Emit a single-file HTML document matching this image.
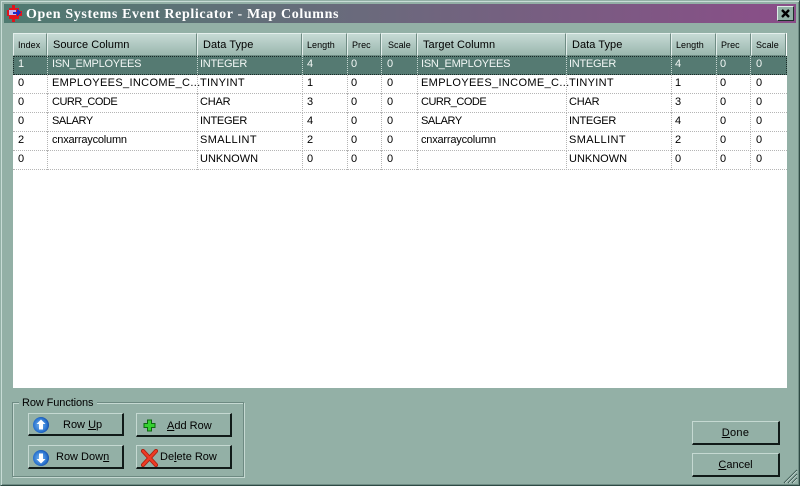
<!DOCTYPE html>
<html><head><meta charset="utf-8"><style>
html,body{margin:0;padding:0;width:800px;height:486px;overflow:hidden;background:#93b0a6}
body{font:11px "Liberation Sans",sans-serif;color:#000;position:relative}
.a{position:absolute}
#win{left:0;top:0;width:798px;height:484px;border-top:1px solid #93b0a6;border-left:1px solid #93b0a6;border-right:1px solid #2e4a44;border-bottom:1px solid #2e4a44;box-shadow:inset 1px 1px 0 #c8dcd6,inset -1px -1px 0 #6f8c84}
#title{left:4px;top:4px;width:792px;height:19px;background:linear-gradient(90deg,#4f7a70,#6a6a7c 45%,#8a4d88)}
#title b{position:absolute;left:22px;top:2px;font:bold 14px/17px "Liberation Serif",serif;color:#fff;letter-spacing:.63px;white-space:nowrap}
#close{left:777px;top:6px;width:15px;height:13px;background:#93b0a6;border:1px solid;border-color:#dcebe6 #1d2f2b #1d2f2b #dcebe6}
#grid{left:13px;top:33px;width:774px;height:355px;background:#fff}
.h{position:absolute;top:0;height:21px;box-sizing:content-box;background:linear-gradient(#c6dad5,#9bb7ae);border-top:1px solid #e4efec;border-left:1px solid #e4efec;border-right:1px solid #6f8c84;border-bottom:1px solid #6f8c84;line-height:23px;white-space:nowrap;overflow:hidden}
.h.s{font-size:9px;padding-left:4px;letter-spacing:.05px}
.h.l{font-size:11px;padding-left:5px;letter-spacing:.05px}
.r{position:absolute;left:0;width:774px;height:18px;border-bottom:1px dotted #b5b5b5}
.r span{position:absolute;top:0;line-height:17px;white-space:nowrap}
.r i{position:absolute;top:0;height:19px;width:0;border-left:1px dotted #b5b5b5}
.r.sel{background:#557a72;color:#f2f7f5;outline:1px dotted #1a2a27;outline-offset:-1px;border-bottom:0;height:19px}
.r.sel i{border-color:#c6d6d1}
.i{letter-spacing:-.27px}.e{letter-spacing:.35px}.n{letter-spacing:-.24px}.c{letter-spacing:-.5px}.s{letter-spacing:-.4px}.k{letter-spacing:-.2px}.w{letter-spacing:.3px}.m{letter-spacing:.4px}.u{letter-spacing:0}.x{letter-spacing:-.2px}
.btn{position:absolute;box-sizing:border-box;background:#93b0a6;border:1px solid;border-color:#c5d9d2 #101a18 #101a18 #c5d9d2;border-width:1px 2px 2px 1px;font-size:11px;text-align:center;white-space:nowrap}
.btn u{text-decoration:underline}
#grp{left:12px;top:402px;width:230px;height:73px;border:1px solid #6d8a82;box-shadow:1px 1px 0 #c5d9d2,inset 1px 1px 0 #c5d9d2}
#grpl{left:19px;top:396px;background:#93b0a6;padding:0 4px 0 3px;font-size:11px;line-height:14px;letter-spacing:-.1px}
.t{position:absolute;white-space:nowrap}
</style></head><body>
<div class="a" id="win"></div>
<div class="a" id="title"><b>Open Systems Event Replicator - Map Columns</b></div>
<svg class="a" style="left:7px;top:5px" width="16" height="17" viewBox="0 0 16 17" shape-rendering="crispEdges"><path d="M5 0h3v3h4v3h3v5h-3v3H8v3H5v-3H2v-3H0V5h2V3h3z" fill="#e0141c"/><rect x="2" y="5" width="7" height="5" fill="#c0b8f0"/><path d="M6 7h4V4h1v1h1v1h1v1h1v1h-1v1h-1v1h-1v1h-1V9H6z" fill="#1c2cc8"/></svg>
<div class="a" id="close"><svg width="15" height="13" style="display:block"><path d="M4 3l7 7M11 3l-7 7" stroke="#000" stroke-width="2.400"/></svg></div>

<div class="a" id="grid">
<div class="h s" style="left:0;width:28px">Index</div>
<div class="h l" style="left:34px;width:143px">Source Column</div>
<div class="h l" style="left:184px;width:98px">Data Type</div>
<div class="h s" style="left:289px;width:39px">Length</div>
<div class="h s" style="left:334px;width:28px">Prec</div>
<div class="h s" style="left:368px;width:28px;padding-left:6px">Scale</div>
<div class="h l" style="left:404px;width:142px">Target Column</div>
<div class="h l" style="left:553px;width:98px">Data Type</div>
<div class="h s" style="left:658px;width:39px">Length</div>
<div class="h s" style="left:703px;width:29px">Prec</div>
<div class="h s" style="left:738px;width:29px">Scale</div>

<div class="r sel" style="top:23px"><i style="left:34px"></i><i style="left:184px"></i><i style="left:289px"></i><i style="left:334px"></i><i style="left:368px"></i><i style="left:404px"></i><i style="left:553px"></i><i style="left:658px"></i><i style="left:703px"></i><i style="left:737px"></i>
<span style="left:5px">1</span><span class="n" style="left:39px">ISN_EMPLOYEES</span><span class="i" style="left:187px">INTEGER</span><span style="left:294px">4</span><span style="left:338px">0</span><span style="left:374px">0</span><span class="n" style="left:408px">ISN_EMPLOYEES</span><span class="i" style="left:556px">INTEGER</span><span style="left:662px">4</span><span style="left:707px">0</span><span style="left:743px">0</span></div>

<div class="r" style="top:42px"><i style="left:34px"></i><i style="left:184px"></i><i style="left:289px"></i><i style="left:334px"></i><i style="left:368px"></i><i style="left:404px"></i><i style="left:553px"></i><i style="left:658px"></i><i style="left:703px"></i><i style="left:737px"></i>
<span style="left:5px">0</span><span class="e" style="left:39px">EMPLOYEES_INCOME_C...</span><span class="w" style="left:187px">TINYINT</span><span style="left:294px">1</span><span style="left:338px">0</span><span style="left:374px">0</span><span class="e" style="left:408px">EMPLOYEES_INCOME_C...</span><span class="w" style="left:556px">TINYINT</span><span style="left:662px">1</span><span style="left:707px">0</span><span style="left:743px">0</span></div>

<div class="r" style="top:61px"><i style="left:34px"></i><i style="left:184px"></i><i style="left:289px"></i><i style="left:334px"></i><i style="left:368px"></i><i style="left:404px"></i><i style="left:553px"></i><i style="left:658px"></i><i style="left:703px"></i><i style="left:737px"></i>
<span style="left:5px">0</span><span class="c" style="left:39px">CURR_CODE</span><span class="k" style="left:187px">CHAR</span><span style="left:294px">3</span><span style="left:338px">0</span><span style="left:374px">0</span><span class="c" style="left:408px">CURR_CODE</span><span class="k" style="left:556px">CHAR</span><span style="left:662px">3</span><span style="left:707px">0</span><span style="left:743px">0</span></div>

<div class="r" style="top:80px"><i style="left:34px"></i><i style="left:184px"></i><i style="left:289px"></i><i style="left:334px"></i><i style="left:368px"></i><i style="left:404px"></i><i style="left:553px"></i><i style="left:658px"></i><i style="left:703px"></i><i style="left:737px"></i>
<span style="left:5px">0</span><span class="s" style="left:39px">SALARY</span><span class="i" style="left:187px">INTEGER</span><span style="left:294px">4</span><span style="left:338px">0</span><span style="left:374px">0</span><span class="s" style="left:408px">SALARY</span><span class="i" style="left:556px">INTEGER</span><span style="left:662px">4</span><span style="left:707px">0</span><span style="left:743px">0</span></div>

<div class="r" style="top:99px"><i style="left:34px"></i><i style="left:184px"></i><i style="left:289px"></i><i style="left:334px"></i><i style="left:368px"></i><i style="left:404px"></i><i style="left:553px"></i><i style="left:658px"></i><i style="left:703px"></i><i style="left:737px"></i>
<span style="left:5px">2</span><span class="x" style="left:39px">cnxarraycolumn</span><span class="m" style="left:187px">SMALLINT</span><span style="left:294px">2</span><span style="left:338px">0</span><span style="left:374px">0</span><span class="x" style="left:408px">cnxarraycolumn</span><span class="m" style="left:556px">SMALLINT</span><span style="left:662px">2</span><span style="left:707px">0</span><span style="left:743px">0</span></div>

<div class="r" style="top:118px"><i style="left:34px"></i><i style="left:184px"></i><i style="left:289px"></i><i style="left:334px"></i><i style="left:368px"></i><i style="left:404px"></i><i style="left:553px"></i><i style="left:658px"></i><i style="left:703px"></i><i style="left:737px"></i>
<span style="left:5px">0</span><span class="u" style="left:187px">UNKNOWN</span><span style="left:294px">0</span><span style="left:338px">0</span><span style="left:374px">0</span><span class="u" style="left:556px">UNKNOWN</span><span style="left:662px">0</span><span style="left:707px">0</span><span style="left:743px">0</span></div>
</div>

<div class="a" id="grp"></div>
<div class="a" id="grpl">Row Functions</div>

<div class="btn" style="left:28px;top:413px;width:96px;height:23px;line-height:22px"><span class="t" style="left:34px;top:0">Row <u>U</u>p</span></div>
<div class="btn" style="left:136px;top:413px;width:96px;height:24px;line-height:24px"><span class="t" style="left:30px;top:0"><u>A</u>dd Row</span></div>
<div class="btn" style="left:28px;top:445px;width:96px;height:24px;line-height:22px"><span class="t" style="left:27px;top:0">Row Dow<u>n</u></span></div>
<div class="btn" style="left:136px;top:445px;width:96px;height:24px;line-height:22px"><span class="t" style="left:23px;top:0">De<u>l</u>ete Row</span></div>

<svg class="a" style="left:32px;top:416px" width="18" height="18" viewBox="0 0 18 18"><defs><radialGradient id="g" cx=".45" cy=".5" r=".6"><stop offset="0" stop-color="#7ab8f0"/><stop offset=".7" stop-color="#2a74d0"/><stop offset="1" stop-color="#0f3f96"/></radialGradient></defs><circle cx="9" cy="9" r="8" fill="url(#g)"/><path d="M9 3.500l4.500 4.500H11v5.500H7V8H4.500z" fill="#fff"/></svg>
<svg class="a" style="left:32px;top:449px" width="18" height="18" viewBox="0 0 18 18"><circle cx="9" cy="9" r="8" fill="url(#g)"/><path d="M9 14.500L4.500 10H7V4.500h4V10h2.500z" fill="#fff"/></svg>
<svg class="a" style="left:143px;top:419px" width="13" height="13" viewBox="0 0 13 13"><path d="M4.500 1h4v3.500H12v4H8.500V12h-4V8.500H1v-4h3.500z" fill="#35d030" stroke="#0c6a10"/></svg>
<svg class="a" style="left:141px;top:449px" width="17" height="18" viewBox="0 0 17 18"><path d="M2 2l13 14M15 2L2 16" stroke="#a82010" stroke-width="4.200" stroke-linecap="round"/><path d="M2 2l13 14M15 2L2 16" stroke="#ee3a24" stroke-width="2.400" stroke-linecap="round"/></svg>

<div class="btn" style="left:692px;top:421px;width:88px;height:24px;line-height:23px;text-align:center;letter-spacing:.3px"><u>D</u>one</div>
<div class="btn" style="left:692px;top:453px;width:88px;height:24px;line-height:23px;text-align:center"><u>C</u>ancel</div>

<svg class="a" style="left:783px;top:469px" width="15" height="15"><path d="M1 14L14 1M5 14L14 5M9 14l5-5" stroke="#33504a" stroke-width="1.100"/><path d="M2 14L14 2M6 14l8-8M10 14l4-4" stroke="#d5e4df" stroke-width=".7"/></svg>
</body></html>
